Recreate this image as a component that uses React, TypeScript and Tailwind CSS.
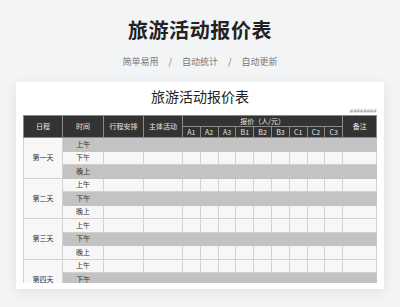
import React from "react";

const priceCols = ["A1", "A2", "A3", "B1", "B2", "B3", "C1", "C2", "C3"];
const days = ["第一天", "第二天", "第三天", "第四天"];
const times = ["上午", "下午", "晚上"];

function isGray(d: number, t: number) {
  if (d === 0) return t !== 1;
  return t === 1;
}

export default function App() {
  const font = { fontFamily: '"Noto Sans CJK SC", "Noto Sans", sans-serif' };
  return (
    <div className="w-[400px] h-[307px] bg-[#f3f4f6] overflow-hidden flex flex-col items-center" style={font}>
      <div className="pt-[17px] text-[20px] leading-[26px] font-bold text-[#222] tracking-[0.6px]">旅游活动报价表</div>
      <div className="mt-[13px] flex items-center gap-[10px] text-[9px] leading-[12px] text-[#777]">
        <span>简单易用</span>
        <span>/</span>
        <span>自动统计</span>
        <span>/</span>
        <span>自动更新</span>
      </div>
      <div className="mt-[14px] w-[368px] h-[207px] bg-white shadow-[0_3px_12px_rgba(0,0,0,0.08)] px-[7px] pb-[6px] flex flex-col">
        <div className="pt-[5px] text-center text-[14px] leading-[18px] text-[#222]">旅游活动报价表</div>
        <div className="mt-[2px] text-right text-[6px] leading-[8px] text-[#888] italic pr-[1px]">########</div>
        <div className="flex-1 overflow-hidden">
          <table className="table-fixed border-collapse w-[354px] text-[7px] text-[#333]">
            <colgroup>
              <col className="w-[39px]" />
              <col className="w-[41px]" />
              <col className="w-[40px]" />
              <col className="w-[39px]" />
              {priceCols.map((c) => (
                <col key={c} className="w-[17.8px]" />
              ))}
              <col className="w-[34px]" />
            </colgroup>
            <thead>
              <tr className="h-[11px]">
                {["日程", "时间", "行程安排", "主体活动"].map((h) => (
                  <th key={h} rowSpan={2} className="bg-[#333] text-[#e5e5e5] font-normal border border-[#8a8a8a] leading-[9px] p-0">
                    {h}
                  </th>
                ))}
                <th colSpan={9} className="bg-[#333] text-[#e5e5e5] font-normal border border-[#8a8a8a] leading-[9px] p-0">
                  报价（人/元）
                </th>
                <th rowSpan={2} className="bg-[#333] text-[#e5e5e5] font-normal border border-[#8a8a8a] leading-[9px] p-0">
                  备注
                </th>
              </tr>
              <tr className="h-[11px]">
                {priceCols.map((c) => (
                  <th key={c} className="bg-[#333] text-[#e5e5e5] font-normal border border-[#8a8a8a] leading-[9px] p-0">
                    {c}
                  </th>
                ))}
              </tr>
            </thead>
            <tbody>
              {days.map((d, di) =>
                times.map((t, ti) => {
                  const g = isGray(di, ti);
                  const cell = g
                    ? "bg-[#c3c3c3] border-y border-[#c3c3c3] p-0"
                    : "bg-[#f7f7f7] border border-[#d2d2d2] p-0";
                  return (
                    <tr key={d + t} className="h-[13.5px]">
                      {ti === 0 && (
                        <td rowSpan={3} className="bg-[#f7f7f7] border border-[#d2d2d2] text-center p-0 leading-[9px]">
                          {d}
                        </td>
                      )}
                      <td className={cell + " text-center leading-[9px]"}>{t}</td>
                      <td className={cell}></td>
                      <td className={cell}></td>
                      {priceCols.map((c) => (
                        <td key={c} className={cell}></td>
                      ))}
                      <td className={cell}></td>
                    </tr>
                  );
                })
              )}
            </tbody>
          </table>
        </div>
      </div>
    </div>
  );
}
